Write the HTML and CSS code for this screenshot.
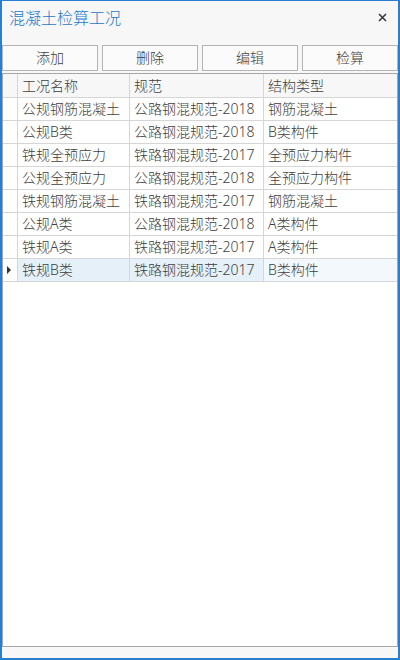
FILE: index.html
```
<!DOCTYPE html>
<html lang="zh">
<head>
<meta charset="utf-8">
<title>混凝土检算工况</title>
<link rel="stylesheet" href="styles.css">
</head>
<body>
<div class="window">
  <div class="titlebar">
    <span class="title">混凝土检算工况</span>
    <span class="close">
      <svg width="9" height="9" viewBox="0 0 9 9"><path d="M1 1L8 8M8 1L1 8" stroke="#3a3a3a" stroke-width="1.6" fill="none"/></svg>
    </span>
  </div>
  <div class="toolbar">
    <button class="btn">添加</button>
    <button class="btn">删除</button>
    <button class="btn">编辑</button>
    <button class="btn">检算</button>
  </div>
  <div class="grid">
    <div class="row head">
      <div class="cell rh"></div>
      <div class="cell">工况名称</div>
      <div class="cell">规范</div>
      <div class="cell last">结构类型</div>
    </div>
    <div class="row">
      <div class="cell rh"></div>
      <div class="cell">公规钢筋混凝土</div>
      <div class="cell">公路钢混规范-2018</div>
      <div class="cell last">钢筋混凝土</div>
    </div>
    <div class="row">
      <div class="cell rh"></div>
      <div class="cell">公规B类</div>
      <div class="cell">公路钢混规范-2018</div>
      <div class="cell last">B类构件</div>
    </div>
    <div class="row">
      <div class="cell rh"></div>
      <div class="cell">铁规全预应力</div>
      <div class="cell">铁路钢混规范-2017</div>
      <div class="cell last">全预应力构件</div>
    </div>
    <div class="row">
      <div class="cell rh"></div>
      <div class="cell">公规全预应力</div>
      <div class="cell">公路钢混规范-2018</div>
      <div class="cell last">全预应力构件</div>
    </div>
    <div class="row">
      <div class="cell rh"></div>
      <div class="cell">铁规钢筋混凝土</div>
      <div class="cell">铁路钢混规范-2017</div>
      <div class="cell last">钢筋混凝土</div>
    </div>
    <div class="row">
      <div class="cell rh"></div>
      <div class="cell">公规A类</div>
      <div class="cell">公路钢混规范-2018</div>
      <div class="cell last">A类构件</div>
    </div>
    <div class="row">
      <div class="cell rh"></div>
      <div class="cell">铁规A类</div>
      <div class="cell">铁路钢混规范-2017</div>
      <div class="cell last">A类构件</div>
    </div>
    <div class="row selected">
      <div class="cell rh"><span class="arrow"></span></div>
      <div class="cell">铁规B类</div>
      <div class="cell">铁路钢混规范-2017</div>
      <div class="cell last">B类构件</div>
    </div>
  </div>
  <div class="statusbar"></div>
</div>
</body>
</html>
```
FILE: styles.css
```
html, body {
  margin: 0;
  padding: 0;
  background: #ffffff;
}

body {
  font-family: "Noto Sans", "Noto Sans CJK SC", sans-serif;
  font-size: 14px;
  font-weight: 300;
  color: #404040;
}

.window {
  width: 400px;
  height: 660px;
  box-sizing: border-box;
  border: 2px solid #2a7ed2;
  border-top-width: 1px;
  background: #f7f7f7;
  display: flex;
  flex-direction: column;
}

.titlebar {
  height: 44px;
  flex: none;
  display: flex;
  align-items: flex-start;
  justify-content: space-between;
  box-sizing: border-box;
  padding: 6px 11px 0 7px;
}

.title {
  font-size: 16px;
  line-height: 22px;
  color: #2477cc;
}

.close {
  display: flex;
  margin-top: 6px;
}

.toolbar {
  flex: none;
  display: grid;
  grid-template-columns: repeat(4, 1fr);
  column-gap: 4px;
  height: 26px;
  margin-bottom: 2px;
}

.btn {
  margin: 0;
  padding: 0;
  border: 1px solid #b4b4b4;
  background: #fbfbfb;
  font-family: "Noto Sans", "Noto Sans CJK SC", sans-serif;
  font-size: 14px;
  font-weight: 300;
  color: #404040;
  line-height: 22px;
}

.grid {
  flex: 1;
  background: #ffffff;
  border: 1px solid #a6a6a6;
}

.row {
  display: grid;
  grid-template-columns: 15px 112px 134px 1fr;
  height: 23px;
}

.row.head {
  height: 24px;
  background: #f7f7f7;
}

.cell {
  box-sizing: border-box;
  border-right: 1px solid #d6d6d6;
  border-bottom: 1px solid #d6d6d6;
  padding-left: 4px;
  line-height: 22px;
  white-space: nowrap;
  overflow: hidden;
}

.head .cell {
  line-height: 23px;
}

.cell.last {
  border-right: none;
}

.cell.rh {
  padding: 0;
  display: flex;
  align-items: center;
  justify-content: center;
}

.selected .cell {
  background: #e5f0f9;
}

.selected .cell.rh {
  background: #ffffff;
}

.selected .cell.last {
  background: #f3f8fd;
}

.arrow {
  width: 0;
  height: 0;
  border-top: 4px solid transparent;
  border-bottom: 4px solid transparent;
  border-left: 4px solid #333333;
  margin-right: 2px;
}

.statusbar {
  flex: none;
  height: 11px;
}
```
